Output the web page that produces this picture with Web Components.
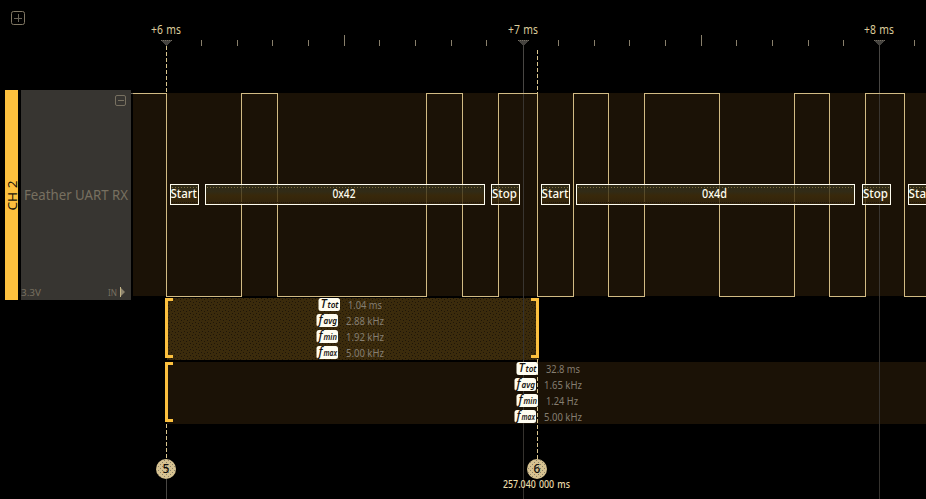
<!DOCTYPE html>
<html lang="en"><head><meta charset="utf-8"><title>Logic analyzer</title>
<style>html,body{margin:0;background:#000;overflow:hidden}body{font-family:"Noto Sans","Open Sans",sans-serif}</style></head>
<body><logic-view></logic-view>
<script>
const define = (name, render) => customElements.define(name, class extends HTMLElement {
  connectedCallback() {
    if (!this.shadowRoot) this.attachShadow({mode: 'open'}).innerHTML = render(this);
  }
});
const at = (el, name, fallback = '') => el.getAttribute(name) ?? fallback;

// One line of text fitted to a given width, baseline 4px above the bottom edge.
define('fit-label', e => {
  const w = at(e, 'w'), s = +at(e, 'size', '12'), h = Math.ceil(s) + 4;
  return `<style>:host{display:block;width:${w}px;height:${h}px;flex:none}svg{display:block;overflow:visible}text{font-size:${s}px;font-weight:${at(e,'weight','400')};fill:currentColor}</style>
  <svg width="${w}" height="${h}"><text x="0" y="${h - 4}" textLength="${w}" lengthAdjust="spacingAndGlyphs">${e.textContent}</text></svg>`;
});

define('time-ruler', () => {
  const minor = [201,237,272,308,379,415,451,486,558,594,629,665,736,772,808,843,914], major = [344,701];
  const marks = [[166,'+6 ms'],[523,'+7 ms'],[879,'+8 ms']];
  return `<style>:host{display:block;height:90px}svg{display:block}text{font-size:12px;fill:#dccb9a;word-spacing:1px}.t{fill:#89806c}</style>
  <svg width="926" height="90" shape-rendering="crispEdges">
  <g class="t">${minor.map(x => `<rect x="${x}" y="40" width="1" height="6"/>`).join('')}${major.map(x => `<rect x="${x}" y="35" width="1" height="11"/>`).join('')}</g>
  ${marks.map(([x,l]) => `<path d="M${x-5} 40h11l-5 6h-1z" fill="#45433f"/><path d="M${x-5} 40.5h11" stroke="#746e62" stroke-dasharray="1 1"/><text x="${x-15}" y="34" textLength="30" lengthAdjust="spacingAndGlyphs">${l}</text>`).join('')}
  <g fill="none" stroke="#817864" shape-rendering="auto"><rect x="11.5" y="11.5" width="13" height="13" rx="2"/><path d="M14 18.5h8M18.5 14v8" stroke="#686256"/></g></svg>`;
});

define('channel-header', () => `<style>
  :host{display:grid;grid-template-columns:13px 110px;column-gap:3px;padding-left:5px;height:210px;width:126px;flex:none;color:#777060}
  .tag{background:#fcc03e;display:flex}
  .tag svg{display:block;overflow:visible}
  .body{background:#373531;display:grid;grid-template-rows:1fr auto 1fr}
  .top{display:flex;justify-content:flex-end;padding:5px 4px}
  .mid{padding-left:3px;height:20px}
  .low{display:flex;align-items:flex-end;height:100%;box-sizing:border-box;justify-content:space-between}
  .in{display:flex;align-items:flex-end;gap:3px;padding-right:5px}
  </style><div class="tag"><svg width="13" height="210"><text transform="translate(11.5 120.5) rotate(-90)" font-size="12.8" textLength="30" lengthAdjust="spacingAndGlyphs" fill="#171308">CH 2</text></svg></div>
  <div class="body"><div class="top"><svg width="12" height="12" fill="none" stroke="#777060"><rect x=".5" y=".5" width="10" height="10" rx="1.5"/><path d="M3 5.5h6"/></svg></div>
  <div class="mid"><fit-label w="104" size="14.2">Feather UART RX</fit-label></div>
  <div class="low"><fit-label w="20" size="9.5">3.3V</fit-label><div class="in"><fit-label w="9" size="9.5">IN</fit-label><svg width="6" height="13"><path d="M0 0v10l5-5z" fill="#8d846e"/><path d="M.5 0v10" stroke="#c3b486"/></svg></div></div></div>`);

define('digital-wave', () => {
  const edges = [166,241,277,426,462,498,537,573,608,644,719,794,829,865,904];
  let d = 'M2 3.5', high = true;
  for (const x of edges) { d += `H${x - 131 + .5}`; high = !high; d += `V${high ? 3.5 : 206.5}`; }
  const frames = [[170,29,'Start',170.5,26.5],[205,280,'0x42',332.5,23],[491,29,'Stop',492,25],[541,29,'Start',541.5,27],[576,279,'0x4d',702,25],[862,29,'Stop',863,25],[908,29,'Start',908.5,27]];
  return `<style>:host{display:block;width:795px;height:210px}svg{display:block}text{font-size:12px;font-weight:500;fill:#fffdf0}</style>
  <svg width="795" height="210"><defs><linearGradient id="g" x2="0" y2="1"><stop stop-color="#35301a"/><stop offset=".35" stop-color="#37311a"/><stop offset=".55" stop-color="#3f2e0c"/><stop offset="1" stop-color="#38280c"/></linearGradient></defs>
  <g shape-rendering="crispEdges"><rect x="2" y="3" width="793" height="203" fill="#1b1206"/><path d="M0 3.5h2" stroke="#6e6759"/><path d="M392.5 0V210M748.5 0V210" stroke="#393530"/><path d="${d}H795" fill="none" stroke="#d2bb84"/>
  ${frames.map(([x,w]) => `<rect x="${x-131+.5}" y="94.5" width="${w-1}" height="20" fill="url(#g)" fill-opacity=".8" stroke="#fffdf0"/><path d="M${x-129} 97.5h${w-4}" stroke="#796b3b" stroke-dasharray="1 2"/><path d="M${x-129} 112.5h${w-4}" stroke="#20150a" stroke-dasharray="1 1"/>`).join('')}</g>
  ${frames.map(f => `<text x="${f[3]-131}" y="108" textLength="${f[4]}" lengthAdjust="spacingAndGlyphs">${f[2]}</text>`).join('')}</svg>`;
});

define('stat-badge', e => `<style>:host{display:block;width:22px;height:13px;flex:none}svg{display:block;overflow:visible}</style>
  <svg width="22" height="13" font-style="italic" fill="#15120c"><rect x=".5" width="21.5" height="13" rx="2.5" fill="#fffdf0"/><text x="2.5" y="10" font-size="12" font-weight="500">${at(e,'main')}</text><text x="${at(e,'main') === 'f' ? 7.5 : 9.5}" y="10" font-size="8.5" font-weight="600" textLength="${at(e,'main') === 'f' ? 13.5 : 11}" lengthAdjust="spacingAndGlyphs">${at(e,'sub')}</text></svg>`);

define('measure-range', e => {
  const w = +at(e,'w'), h = 62, closed = e.hasAttribute('closed');
  const rows = JSON.parse(at(e,'stats'));
  return `<style>:host{display:grid;width:${w}px;height:62px;margin-left:165px}.bg,.stats{grid-area:1/1}.bg{display:block}
  .stats{display:grid;grid-auto-rows:16px;padding-left:${at(e,'inset')}px;color:#857e71;z-index:3}.row{display:flex;gap:8px}.row fit-label{margin-top:1px}</style>
  <svg class="bg" width="${w}" height="${h}" shape-rendering="crispEdges"><defs><pattern id="d" width="6" height="6" patternUnits="userSpaceOnUse"><path d="M0 0h1v1H0zM3 1h1v1H3zM1 3h1v1H1zM4 4h1v1H4z" fill="#1e1508"/></pattern></defs>
  <rect x="2" width="${w-2}" height="62" fill="${closed ? '#3b2b0c' : '#1b1206'}"/>${closed ? `<rect x="2" width="${w-2}" height="62" fill="url(#d)"/>` : ''}
  <path d="M8 1.5H1.5V58.5H8" fill="none" stroke="#fcc03e" stroke-width="3"/>${closed ? `<path d="M${w-8} 1.5h6.5V58.5h-6.5" fill="none" stroke="#fcc03e" stroke-width="3"/>` : ''}</svg>
  <div class="stats">${rows.map(([m,s,v,lw,dx]) => `<div class="row" style="padding-left:${dx}px"><stat-badge main="${m}" sub="${s}"></stat-badge><fit-label w="${lw}" size="9.9">${v}</fit-label></div>`).join('')}</div>`;
});

// Cursor lines and their numbered handles lie over the tracks, below the statistics.
define('cursor-layer', () => `<style>:host{position:absolute;inset:0;pointer-events:none;z-index:2}svg{display:block}</style>
  <svg width="926" height="499"><defs><pattern id="p" width="4" height="4" patternUnits="userSpaceOnUse"><path d="M0 0h1v1H0zM2 2h1v1H2z" fill="#8d8167"/></pattern></defs>
  <g shape-rendering="crispEdges"><path d="M166.5 478V499M523.5 46V93M879.5 46V93" stroke="#484643"/><path d="M523.5 297V499M879.5 297V499" stroke="#35322e"/>
  <path d="M166.5 46V93M166.5 424V460M537.5 50V93M537.5 359V460" stroke="#d9c58f" stroke-dasharray="4 2"/></g>
  ${[[166,'5'],[537,'6']].map(([x,n]) => `<circle cx="${x}" cy="469" r="10" fill="#d6c291"/><circle cx="${x}" cy="469" r="9.5" fill="url(#p)"/><text x="${x}" y="473.3" text-anchor="middle" font-size="12" font-weight="500" fill="#100d07">${n}</text>`).join('')}
  <text x="503" y="488" font-size="9.8" font-weight="500" word-spacing="1" fill="#eadba9" textLength="67" lengthAdjust="spacingAndGlyphs">257.040 000 ms</text></svg>`);

define('logic-view', () => `<style>:host{display:block;position:relative;width:926px;height:499px;background:#000;overflow:hidden}
  .channel{display:flex;height:208px}.ranges{display:grid;row-gap:2px}
  channel-header{box-sizing:content-box}</style>
  <time-ruler></time-ruler>
  <div class="channel"><channel-header></channel-header><digital-wave></digital-wave></div>
  <cursor-layer></cursor-layer>
  <div class="ranges">
  <measure-range w="374" closed inset="151" stats='[["T","tot","1.04 ms",34,2],["f","avg","2.88 kHz",38,0],["f","min","1.92 kHz",38,0],["f","max","5.00 kHz",38,0]]'></measure-range>
  <measure-range w="761" inset="349" stats='[["T","tot","32.8 ms",34,2],["f","avg","1.65 kHz",38,0],["f","min","1.24 Hz",32,2],["f","max","5.00 kHz",38,0]]'></measure-range></div>`);
</script></body></html>
